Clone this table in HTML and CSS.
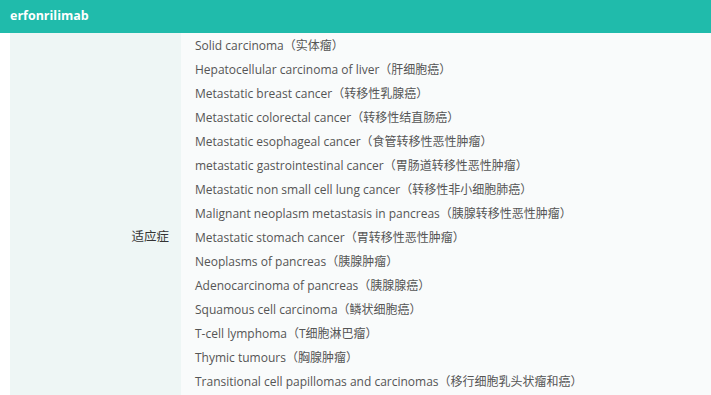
FILE: index.html
```html
<!DOCTYPE html>
<html>
<head>
<meta charset="utf-8">
<link rel="stylesheet" href="styles.css">
</head>
<body>
<div class="header">erfonrilimab</div>
<div class="table">
  <div class="label">适应症</div>
  <ul class="list">
    <li>Solid carcinoma（实体瘤）</li>
    <li>Hepatocellular carcinoma of liver（肝细胞癌）</li>
    <li>Metastatic breast cancer（转移性乳腺癌）</li>
    <li>Metastatic colorectal cancer（转移性结直肠癌）</li>
    <li>Metastatic esophageal cancer（食管转移性恶性肿瘤）</li>
    <li>metastatic gastrointestinal cancer（胃肠道转移性恶性肿瘤）</li>
    <li>Metastatic non small cell lung cancer（转移性非小细胞肺癌）</li>
    <li>Malignant neoplasm metastasis in pancreas（胰腺转移性恶性肿瘤）</li>
    <li>Metastatic stomach cancer（胃转移性恶性肿瘤）</li>
    <li>Neoplasms of pancreas（胰腺肿瘤）</li>
    <li>Adenocarcinoma of pancreas（胰腺腺癌）</li>
    <li>Squamous cell carcinoma（鳞状细胞癌）</li>
    <li>T-cell lymphoma（T细胞淋巴瘤）</li>
    <li>Thymic tumours（胸腺肿瘤）</li>
    <li>Transitional cell papillomas and carcinomas（移行细胞乳头状瘤和癌）</li>
  </ul>
</div>
</body>
</html>
```
FILE: styles.css
```css
html, body {
  margin: 0;
  padding: 0;
  background: #ffffff;
  font-family: "Open Sans", "Noto Sans CJK SC", sans-serif;
  overflow: hidden;
}
.header {
  height: 33px;
  line-height: 32px;
  background: #20bbab;
  color: #ffffff;
  font-weight: bold;
  font-size: 12.5px;
  padding-left: 10px;
}
.table {
  display: flex;
  margin-left: 10px;
}
.label {
  width: 171px;
  flex: none;
  background: #eef6f5;
  display: flex;
  align-items: center;
  justify-content: flex-end;
  padding-right: 12px;
  box-sizing: border-box;
  font-size: 12.5px;
  color: #333333;
}
.list {
  flex: 1;
  list-style: none;
  margin: 0;
  padding: 1px 0 43px 14px;
  background: #f9fbfb;
}
.list li {
  height: 24px;
  line-height: 24px;
  font-size: 12px;
  color: #555555;
  white-space: nowrap;
}
```
